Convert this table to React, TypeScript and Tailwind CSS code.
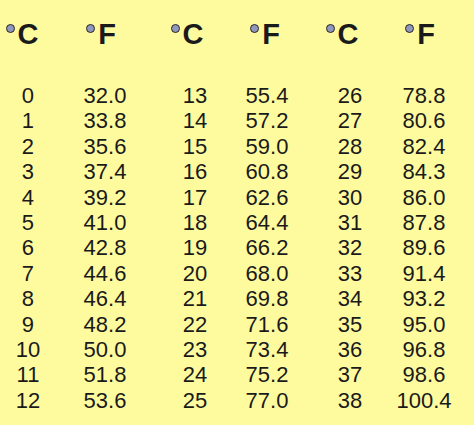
const cols: string[][] = [
  ["0", "1", "2", "3", "4", "5", "6", "7", "8", "9", "10", "11", "12"],
  ["32.0", "33.8", "35.6", "37.4", "39.2", "41.0", "42.8", "44.6", "46.4", "48.2", "50.0", "51.8", "53.6"],
  ["13", "14", "15", "16", "17", "18", "19", "20", "21", "22", "23", "24", "25"],
  ["55.4", "57.2", "59.0", "60.8", "62.6", "64.4", "66.2", "68.0", "69.8", "71.6", "73.4", "75.2", "77.0"],
  ["26", "27", "28", "29", "30", "31", "32", "33", "34", "35", "36", "37", "38"],
  ["78.8", "80.6", "82.4", "84.3", "86.0", "87.8", "89.6", "91.4", "93.2", "95.0", "96.8", "98.6", "100.4"],
]

function Header({ unit, shift }: { unit: string; shift: string }) {
  return (
    <div className={`flex h-[28px] items-start justify-center ${shift}`}>
      <span className="mt-[4px] mr-[3px] inline-block h-[9px] w-[9px] rounded-full border-[1.5px] border-[#262626] bg-[#9098bb]" />
      <span className="text-[29px] font-bold leading-[28px]">{unit}</span>
    </div>
  )
}

function Column({ unit, shift, values, className }: { unit: string; shift: string; values: string[]; className: string }) {
  return (
    <div className={`flex w-[56px] flex-col items-center ${className}`}>
      <Header unit={unit} shift={shift} />
      <div className="mt-[35px] flex flex-col items-center">
        {values.map((v) => (
          <span key={v} className="whitespace-nowrap text-[22px] leading-[25.4px]">
            {v}
          </span>
        ))}
      </div>
    </div>
  )
}

export default function App() {
  return (
    <div className="h-[425px] w-[474px] overflow-hidden bg-[#fefb9f] pt-[20px] font-['Liberation_Sans',Arial,sans-serif] text-[#1a1a1a]">
      <div className="flex">
        <Column unit="C" shift="pr-[12px]" values={cols[0]} className="" />
        <Column unit="F" shift="pr-[8px]" values={cols[1]} className="ml-[21px]" />
        <Column unit="C" shift="pr-[16px]" values={cols[2]} className="ml-[34px]" />
        <Column unit="F" shift="pr-[4px]" values={cols[3]} className="ml-[16px]" />
        <Column unit="C" shift="pr-[16px]" values={cols[4]} className="ml-[27px]" />
        <Column unit="F" shift="pr-[8px]" values={cols[5]} className="ml-[18px]" />
      </div>
    </div>
  )
}
